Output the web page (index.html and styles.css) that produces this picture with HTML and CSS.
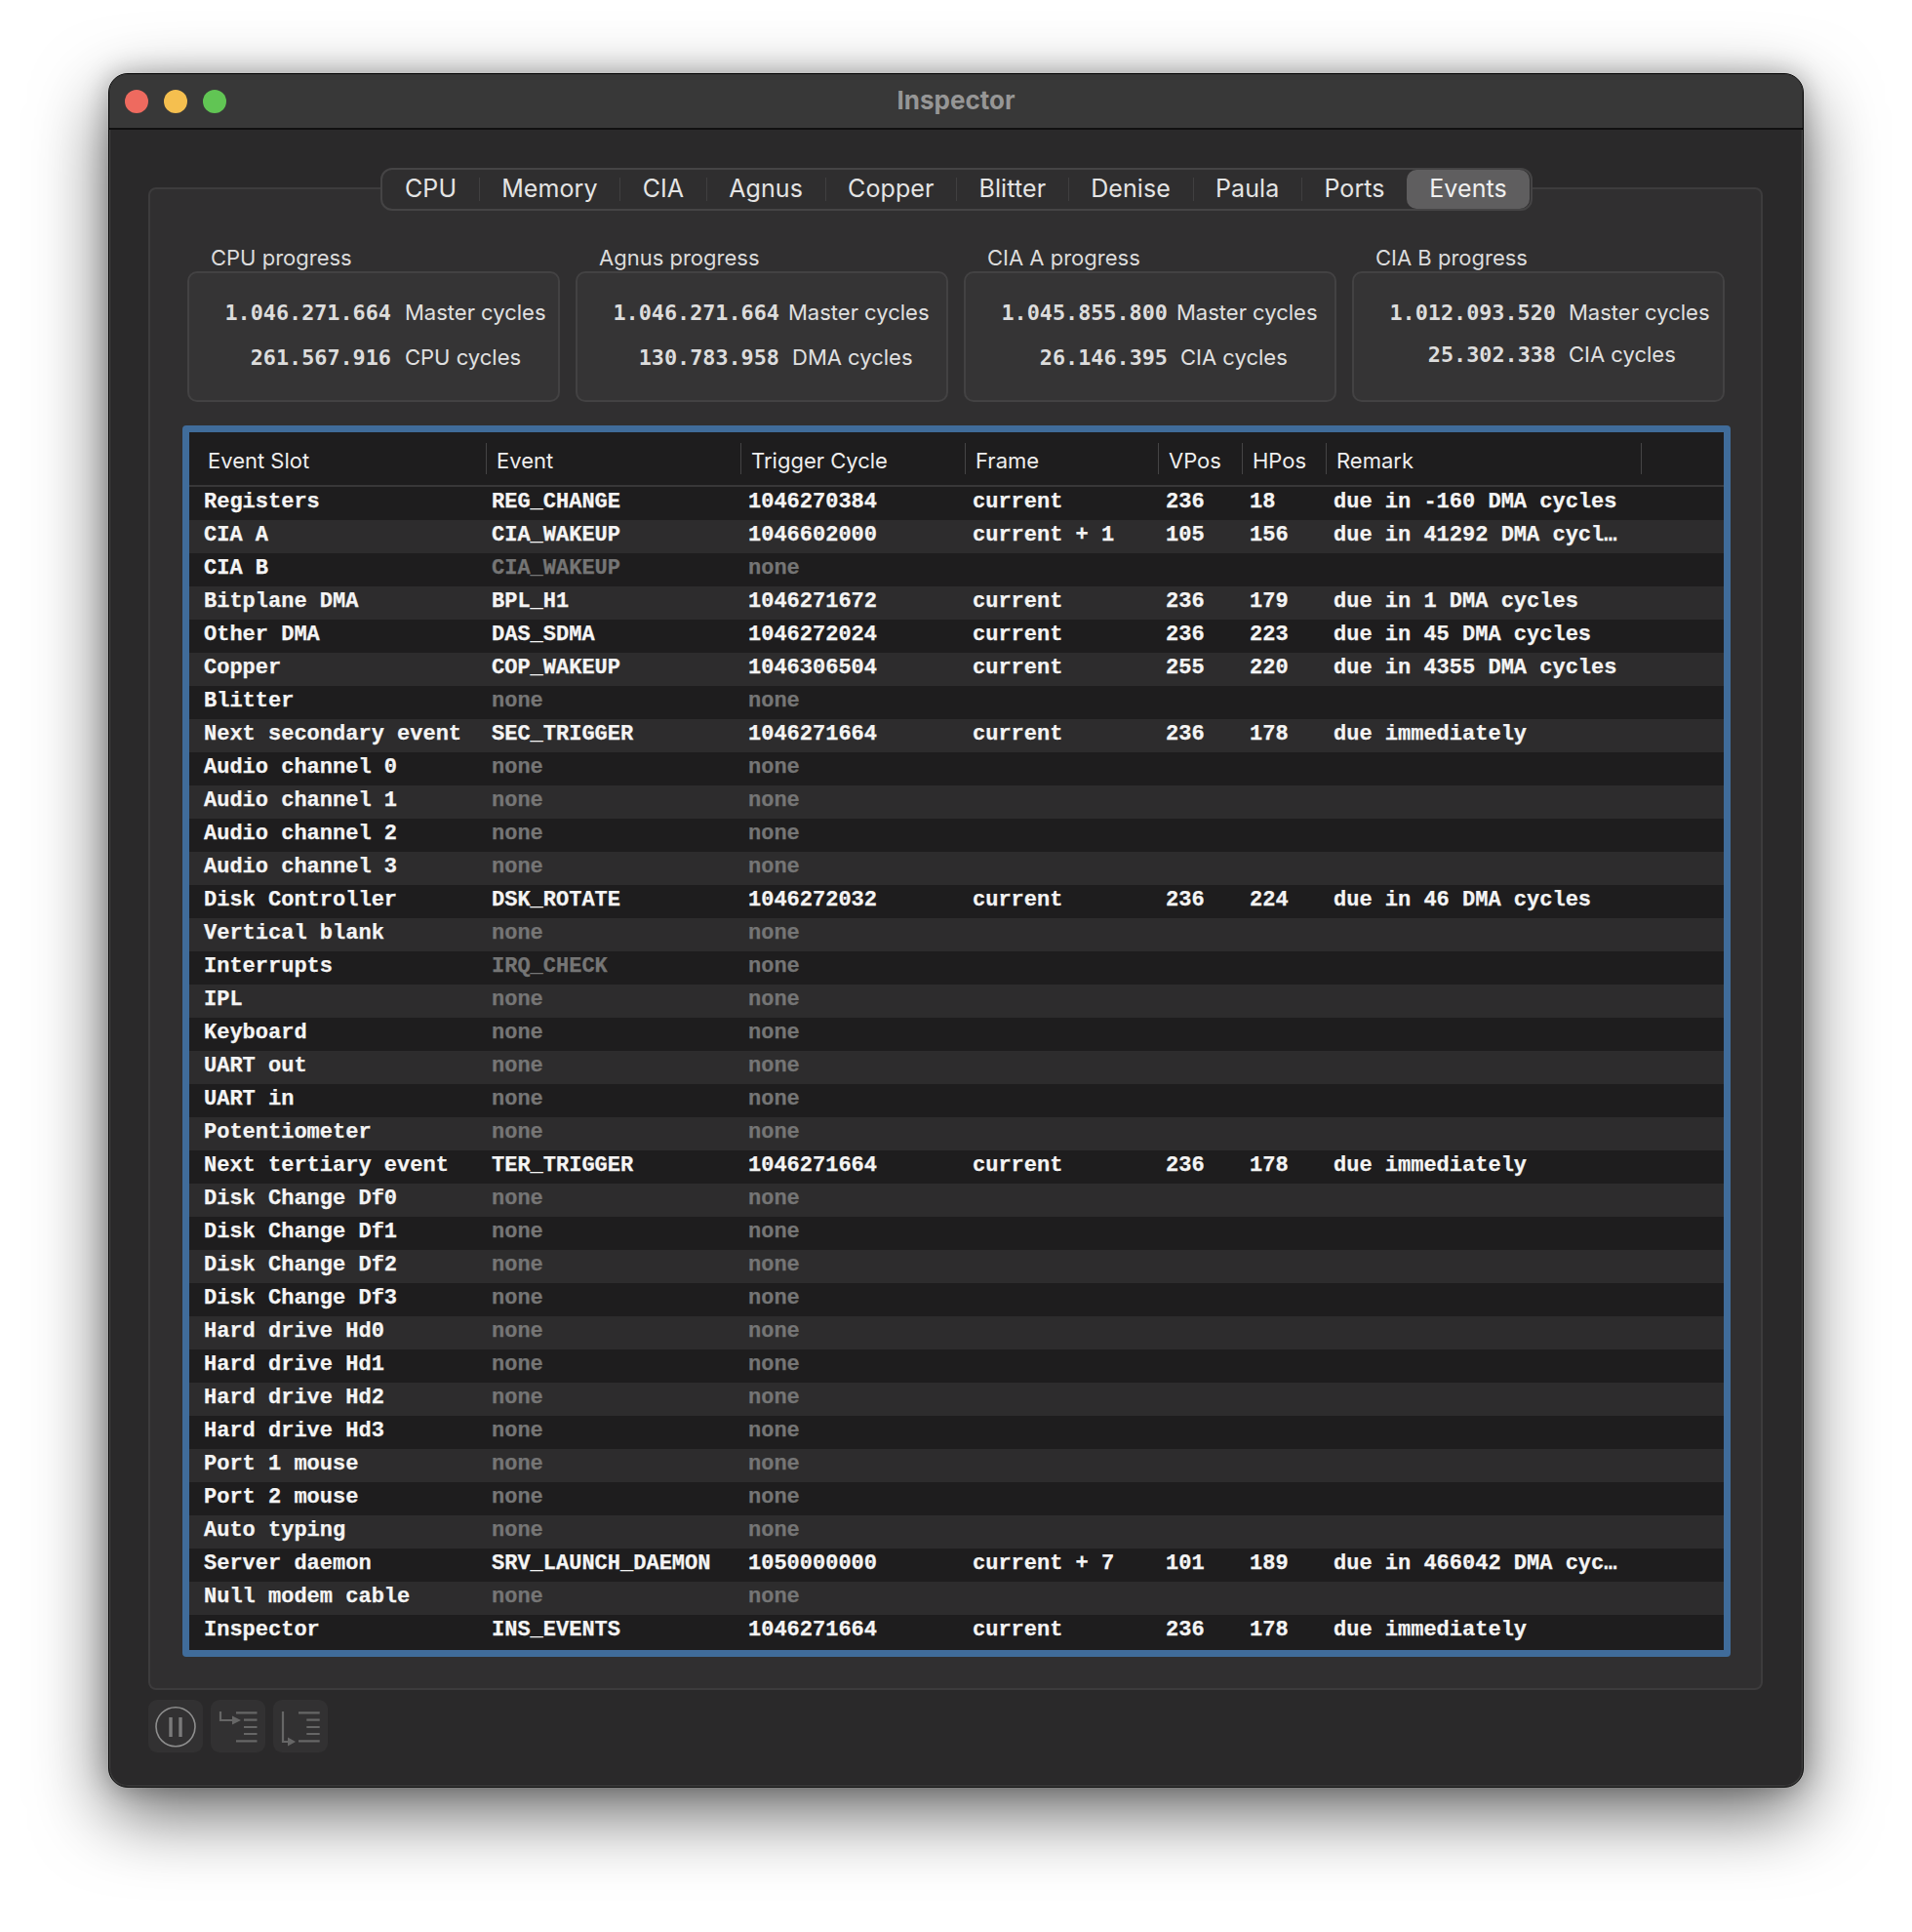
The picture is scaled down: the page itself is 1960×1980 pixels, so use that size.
FILE: index.html
```html
<!DOCTYPE html>
<html lang="en">
<head>
  <meta charset="UTF-8" />
  <title>Inspector</title>
  <link rel="stylesheet" href="styles.css">
</head>
<body>
<div class="window">
  <!-- Title bar -->
  <div class="titlebar">
    <span class="light red"></span>
    <span class="light yellow"></span>
    <span class="light green"></span>
    <div class="title">Inspector</div>
  </div>

  <div class="panel">
    <div class="tabs">
      <span class="tab">CPU</span>
      <span class="tab">Memory</span>
      <span class="tab">CIA</span>
      <span class="tab">Agnus</span>
      <span class="tab">Copper</span>
      <span class="tab">Blitter</span>
      <span class="tab">Denise</span>
      <span class="tab">Paula</span>
      <span class="tab">Ports</span>
      <span class="tab selected">Events</span>
    </div>

    <!-- Progress boxes -->
    <div class="progress-row">
      <div class="progress">
        <div class="progress-title">CPU progress</div>
        <div class="progress-box box-cpu">
          <span class="num">1.046.271.664</span><span class="unit">Master cycles</span>
          <span class="num">261.567.916</span><span class="unit">CPU cycles</span>
        </div>
      </div>
      <div class="progress">
        <div class="progress-title">Agnus progress</div>
        <div class="progress-box box-agnus">
          <span class="num">1.046.271.664</span><span class="unit">Master cycles</span>
          <span class="num">130.783.958</span><span class="unit nudge">DMA cycles</span>
        </div>
      </div>
      <div class="progress">
        <div class="progress-title">CIA A progress</div>
        <div class="progress-box box-ciaa">
          <span class="num">1.045.855.800</span><span class="unit">Master cycles</span>
          <span class="num">26.146.395</span><span class="unit nudge">CIA cycles</span>
        </div>
      </div>
      <div class="progress">
        <div class="progress-title">CIA B progress</div>
        <div class="progress-box box-ciab">
          <span class="num">1.012.093.520</span><span class="unit">Master cycles</span>
          <span class="num">25.302.338</span><span class="unit">CIA cycles</span>
        </div>
      </div>
    </div>

    <!-- Event table -->
    <div class="table-frame">
      <table class="events">
        <colgroup>
          <col class="c-slot"><col class="c-event"><col class="c-trigger"><col class="c-frame">
          <col class="c-pos"><col class="c-pos"><col class="c-remark"><col>
        </colgroup>
        <thead>
          <tr><th>Event Slot</th><th>Event</th><th>Trigger Cycle</th><th>Frame</th><th>VPos</th><th>HPos</th><th>Remark</th><th></th></tr>
        </thead>
        <tbody>
          <tr><td>Registers</td><td>REG_CHANGE</td><td>1046270384</td><td>current</td><td>236</td><td>18</td><td>due in -160 DMA cycles</td><td></td></tr>
          <tr><td>CIA A</td><td>CIA_WAKEUP</td><td>1046602000</td><td>current + 1</td><td>105</td><td>156</td><td>due in 41292 DMA cycl…</td><td></td></tr>
          <tr><td>CIA B</td><td class="off">CIA_WAKEUP</td><td class="off">none</td><td></td><td></td><td></td><td></td><td></td></tr>
          <tr><td>Bitplane DMA</td><td>BPL_H1</td><td>1046271672</td><td>current</td><td>236</td><td>179</td><td>due in 1 DMA cycles</td><td></td></tr>
          <tr><td>Other DMA</td><td>DAS_SDMA</td><td>1046272024</td><td>current</td><td>236</td><td>223</td><td>due in 45 DMA cycles</td><td></td></tr>
          <tr><td>Copper</td><td>COP_WAKEUP</td><td>1046306504</td><td>current</td><td>255</td><td>220</td><td>due in 4355 DMA cycles</td><td></td></tr>
          <tr><td>Blitter</td><td class="off">none</td><td class="off">none</td><td></td><td></td><td></td><td></td><td></td></tr>
          <tr><td>Next secondary event</td><td>SEC_TRIGGER</td><td>1046271664</td><td>current</td><td>236</td><td>178</td><td>due immediately</td><td></td></tr>
          <tr><td>Audio channel 0</td><td class="off">none</td><td class="off">none</td><td></td><td></td><td></td><td></td><td></td></tr>
          <tr><td>Audio channel 1</td><td class="off">none</td><td class="off">none</td><td></td><td></td><td></td><td></td><td></td></tr>
          <tr><td>Audio channel 2</td><td class="off">none</td><td class="off">none</td><td></td><td></td><td></td><td></td><td></td></tr>
          <tr><td>Audio channel 3</td><td class="off">none</td><td class="off">none</td><td></td><td></td><td></td><td></td><td></td></tr>
          <tr><td>Disk Controller</td><td>DSK_ROTATE</td><td>1046272032</td><td>current</td><td>236</td><td>224</td><td>due in 46 DMA cycles</td><td></td></tr>
          <tr><td>Vertical blank</td><td class="off">none</td><td class="off">none</td><td></td><td></td><td></td><td></td><td></td></tr>
          <tr><td>Interrupts</td><td class="off">IRQ_CHECK</td><td class="off">none</td><td></td><td></td><td></td><td></td><td></td></tr>
          <tr><td>IPL</td><td class="off">none</td><td class="off">none</td><td></td><td></td><td></td><td></td><td></td></tr>
          <tr><td>Keyboard</td><td class="off">none</td><td class="off">none</td><td></td><td></td><td></td><td></td><td></td></tr>
          <tr><td>UART out</td><td class="off">none</td><td class="off">none</td><td></td><td></td><td></td><td></td><td></td></tr>
          <tr><td>UART in</td><td class="off">none</td><td class="off">none</td><td></td><td></td><td></td><td></td><td></td></tr>
          <tr><td>Potentiometer</td><td class="off">none</td><td class="off">none</td><td></td><td></td><td></td><td></td><td></td></tr>
          <tr><td>Next tertiary event</td><td>TER_TRIGGER</td><td>1046271664</td><td>current</td><td>236</td><td>178</td><td>due immediately</td><td></td></tr>
          <tr><td>Disk Change Df0</td><td class="off">none</td><td class="off">none</td><td></td><td></td><td></td><td></td><td></td></tr>
          <tr><td>Disk Change Df1</td><td class="off">none</td><td class="off">none</td><td></td><td></td><td></td><td></td><td></td></tr>
          <tr><td>Disk Change Df2</td><td class="off">none</td><td class="off">none</td><td></td><td></td><td></td><td></td><td></td></tr>
          <tr><td>Disk Change Df3</td><td class="off">none</td><td class="off">none</td><td></td><td></td><td></td><td></td><td></td></tr>
          <tr><td>Hard drive Hd0</td><td class="off">none</td><td class="off">none</td><td></td><td></td><td></td><td></td><td></td></tr>
          <tr><td>Hard drive Hd1</td><td class="off">none</td><td class="off">none</td><td></td><td></td><td></td><td></td><td></td></tr>
          <tr><td>Hard drive Hd2</td><td class="off">none</td><td class="off">none</td><td></td><td></td><td></td><td></td><td></td></tr>
          <tr><td>Hard drive Hd3</td><td class="off">none</td><td class="off">none</td><td></td><td></td><td></td><td></td><td></td></tr>
          <tr><td>Port 1 mouse</td><td class="off">none</td><td class="off">none</td><td></td><td></td><td></td><td></td><td></td></tr>
          <tr><td>Port 2 mouse</td><td class="off">none</td><td class="off">none</td><td></td><td></td><td></td><td></td><td></td></tr>
          <tr><td>Auto typing</td><td class="off">none</td><td class="off">none</td><td></td><td></td><td></td><td></td><td></td></tr>
          <tr><td>Server daemon</td><td>SRV_LAUNCH_DAEMON</td><td>1050000000</td><td>current + 7</td><td>101</td><td>189</td><td>due in 466042 DMA cyc…</td><td></td></tr>
          <tr><td>Null modem cable</td><td class="off">none</td><td class="off">none</td><td></td><td></td><td></td><td></td><td></td></tr>
          <tr><td>Inspector</td><td>INS_EVENTS</td><td>1046271664</td><td>current</td><td>236</td><td>178</td><td>due immediately</td><td></td></tr>
        </tbody>
      </table>
    </div>
  </div>

  <!-- Toolbar buttons -->
  <div class="toolbar">
    <div class="tool">
      <svg viewBox="0 0 56 54" width="56" height="54">
        <circle cx="28" cy="27.7" r="20" class="ring"/>
        <path d="M23 18V38M33 18V38" class="bars"/>
      </svg>
    </div>
    <div class="tool">
      <svg viewBox="0 0 56 54" width="56" height="54">
        <path d="M10 12V21H24" class="glyph"/>
        <path d="M22 16.5L31 21L22 25.5Z" class="head"/>
        <path d="M26 13.3H47.5M34 20.7H47.5M34 28H47.5M34 35H47.5M26 42.3H47.5" class="glyph"/>
      </svg>
    </div>
    <div class="tool">
      <svg viewBox="0 0 56 54" width="56" height="54">
        <path d="M10 12V43H17" class="glyph"/>
        <path d="M15 38.5L23 43L15 47.5Z" class="head"/>
        <path d="M26 13.3H47.7M34.3 20.7H47.7M34.3 28H47.7M34.3 35H47.7M26 42.3H47.7" class="glyph"/>
      </svg>
    </div>
  </div>
</div>
</body>
</html>
```
FILE: styles.css
```css
body {
  margin: 0;
  padding: 75px 111px 148px 111px;
  background-color: #fff;
  font-family: Inter, "Liberation Sans", sans-serif;
  color: #e6e6e6;
}

.window {
  box-sizing: border-box;
  height: 1757px;
  border: 1px solid #000;
  border-radius: 20px;
  background-color: #2a292a;
  box-shadow: inset 0 0 0 1px #4a4a4a, 0 26px 76px rgba(0, 0, 0, 0.6), 0 0 26px rgba(0, 0, 0, 0.25);
}

.titlebar {
  display: flex;
  align-items: center;
  gap: 16px;
  position: relative;
  box-sizing: border-box;
  height: 57px;
  padding-left: 16px;
  background-color: #383838;
  border-bottom: 2px solid #111;
  border-radius: 19px 19px 0 0;
}

.light {
  width: 24px;
  height: 24px;
  border-radius: 50%;
}

.red { background-color: #ee6a5f; }
.yellow { background-color: #f5bf4f; }
.green { background-color: #61c554; }

.title {
  position: absolute;
  left: 0;
  right: 0;
  top: 11px;
  text-align: center;
  font-size: 26px;
  font-weight: 700;
  color: #969696;
}

.panel {
  box-sizing: border-box;
  height: 1540px;
  margin: 59px 41px 0 40px;
  padding: 0 34px;
  background-color: #302f30;
  border: 2px solid #3d3c3d;
  border-radius: 8px;
}

.tabs {
  display: flex;
  align-items: center;
  box-sizing: border-box;
  width: 1181px;
  height: 44px;
  margin: -22px 0 0 202px;
  padding: 0 1px 0 0;
  background-color: #2f2e2f;
  border: 2px solid #454445;
  border-radius: 12px;
  font-size: 25px;
  letter-spacing: 0.1px;
  color: #e4e4e4;
}

.tab {
  height: 24px;
  line-height: 22px;
  padding: 0 22.5px;
  border-left: 1px solid #403f40;
}

.tab:first-child {
  padding-left: 23px;
  border-left: none;
}

.tab.selected {
  box-sizing: border-box;
  width: 128px;
  height: 40px;
  line-height: 38px;
  margin-left: auto;
  padding: 0;
  text-align: center;
  background-color: #5f5e5f;
  border: none;
  border-radius: 10px;
  color: #f0f0f0;
}

.progress-row {
  display: grid;
  grid-template-columns: repeat(4, 382px);
  gap: 16px;
  margin: 34px 0 24px 4px;
}

.progress-title {
  padding-left: 24px;
  height: 28px;
  line-height: 28px;
  font-size: 22px;
  color: #dcdcdc;
}

.progress-box {
  display: grid;
  grid-template-columns: 207px auto;
  align-content: start;
  row-gap: 18px;
  box-sizing: border-box;
  height: 134px;
  padding-top: 27px;
  background-color: #353435;
  border: 2px solid #434243;
  border-radius: 10px;
  font-size: 22px;
  line-height: 28px;
}

.box-cpu { column-gap: 14px; }
.box-agnus { column-gap: 9px; }
.box-ciaa { column-gap: 9px; }
.box-ciab { column-gap: 13px; row-gap: 15px; }

.num {
  text-align: right;
  font-family: "DejaVu Sans Mono", monospace;
  font-weight: bold;
  font-size: 21.8px;
  color: #dcdcdc;
}

.unit {
  margin-top: -1px;
  white-space: nowrap;
  color: #e0e0e0;
}

.nudge {
  margin-left: 4px;
}

.table-frame {
  box-sizing: border-box;
  height: 1262px;
  margin-left: -1px;
  width: 1587px;
  border: 7px solid #406c9a;
  border-radius: 4px;
  background-color: #1e1d1e;
}

.events {
  width: 100%;
  table-layout: fixed;
  border-collapse: collapse;
}

.c-slot { width: 305px; }
.c-event { width: 261px; }
.c-trigger { width: 230px; }
.c-frame { width: 198px; }
.c-pos { width: 86px; }
.c-remark { width: 323px; }

.events th {
  position: relative;
  height: 50px;
  padding: 4px 0 0 10px;
  text-align: left;
  font-weight: normal;
  font-size: 22px;
  color: #eee;
  border-bottom: 2px solid #383738;
}

.events th:first-child {
  padding-left: 19px;
}

.events th:not(:last-child)::after {
  content: "";
  position: absolute;
  right: 0;
  top: 11px;
  bottom: 11px;
  width: 1px;
  background-color: #454445;
}

.events td {
  height: 32px;
  padding: 0 7px 2px 7px;
  white-space: nowrap;
  font-family: "Liberation Mono", monospace;
  font-weight: bold;
  font-size: 22px;
  line-height: 32px;
  color: #f4f4f4;
  -webkit-text-stroke: 0.25px;
}

.events td:first-child {
  padding-left: 15px;
}

.events td:nth-child(2) {
  padding-left: 5px;
}

.events tbody tr:nth-child(even) {
  background-color: #2d2c2d;
}

.events td.off {
  color: #757575;
}

.toolbar {
  display: flex;
  gap: 8px;
  margin: 10px 0 0 40px;
}

.tool {
  width: 56px;
  height: 54px;
  background-color: #323132;
  border-radius: 9px;
}

.ring {
  fill: none;
  stroke: #8e8e8e;
  stroke-width: 1.6;
}

.bars {
  fill: none;
  stroke: #7a7a7a;
  stroke-width: 3.4;
}

.glyph {
  fill: none;
  stroke: #666;
  stroke-width: 2.2;
}

.head {
  fill: #666;
}
```
